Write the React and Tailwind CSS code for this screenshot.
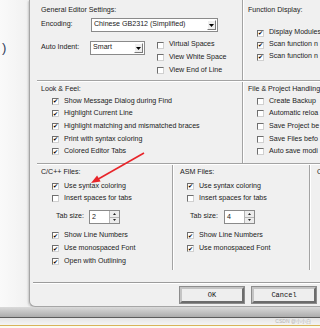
import React from "react";

function Box({ checked }) {
  return (
    <span className="flex items-center justify-center w-[7px] h-[7px] shrink-0 bg-white border border-t-[#6e6e6e] border-l-[#6e6e6e] border-r-[#d0d0d0] border-b-[#d0d0d0]">
      {checked && (
        <span className="block text-[6px] leading-none font-['DejaVu_Sans',sans-serif] text-[#000000]">✔</span>
      )}
    </span>
  );
}

function Row({ checked, label, h }) {
  return (
    <div className={"flex items-center gap-[5px] " + h}>
      <Box checked={checked} />
      <span className="whitespace-nowrap leading-none">{label}</span>
    </div>
  );
}

function Select({ w, text }) {
  return (
    <div className={"flex items-center h-[14px] bg-white border border-[#8a8a8a] " + w}>
      <span className="flex-1 pl-[2px] whitespace-nowrap overflow-hidden leading-none">{text}</span>
      <span className="w-[9px] h-[10px] mr-[1px] bg-[#efefef] border border-t-[#ffffff] border-l-[#ffffff] border-r-[#7a7a7a] border-b-[#7a7a7a] flex items-center justify-center">
        <svg width="5" height="3" viewBox="0 0 5 3">
          <path d="M0 0H5L2.5 3Z" fill="#000" />
        </svg>
      </span>
    </div>
  );
}

function Spin({ v }) {
  return (
    <div className="flex h-[14px] w-[31px] bg-white border border-[#8a8a8a]">
      <span className="flex-1 pl-[2px] leading-[12px]">{v}</span>
      <div className="w-[10px] flex flex-col bg-[#ececec] border-l border-[#b4b4b4]">
        <div className="flex-1 flex items-center justify-center border-b border-[#b4b4b4]">
          <svg width="3" height="2" viewBox="0 0 3 2">
            <path d="M0 2H3L1.5 0Z" fill="#222" />
          </svg>
        </div>
        <div className="flex-1 flex items-center justify-center">
          <svg width="3" height="2" viewBox="0 0 3 2">
            <path d="M0 0H3L1.5 2Z" fill="#222" />
          </svg>
        </div>
      </div>
    </div>
  );
}

function VSep() {
  return <div className="w-[2px] shrink-0 border-l border-[#a3a3a3] bg-white" />;
}

export default function App() {
  return (
    <div className="relative w-[320px] h-[328px] overflow-hidden bg-[#f8f8f8] font-['Liberation_Sans',Arial,sans-serif] text-[7.1px] text-[#222222]">
      <div className="flex h-[307px]">
        <div className="w-[29px] shrink-0 bg-gradient-to-r from-[#fafafa] to-[#f1f1f1]">
          <div className="pt-[41px] pl-[2px] text-[13px] leading-none text-[#2e3a58]">)</div>
        </div>
        <div className="flex-1 flex flex-col bg-[#f0f0f0] border-l border-b border-[#a6a6a6] rounded-bl-[6px] shadow-[-1px_1px_2px_rgba(0,0,0,0.18)] overflow-hidden">
          {/* Section 1 */}
          <div className="flex h-[80px]">
            <div className="w-[212px] shrink-0 pl-[11px]">
              <div className="mt-[4px] h-[12px] leading-[12px]">General Editor Settings:</div>
              <div className="mt-[2px] flex items-center h-[14px]">
                <span className="w-[50px] leading-none">Encoding:</span>
                <Select w="w-[127px]" text="Chinese GB2312 (Simplified)" />
              </div>
              <div className="mt-[7px] flex items-start">
                <div className="mt-[2px] flex items-center h-[14px]">
                  <span className="w-[49px] leading-none">Auto Indent:</span>
                  <Select w="w-[55px]" text="Smart" />
                </div>
                <div className="ml-[12px] flex flex-col">
                  <Row h="h-[12px]" label="Virtual Spaces" />
                  <Row h="h-[13px]" label="View White Space" />
                  <Row h="h-[13px]" label="View End of Line" />
                </div>
              </div>
            </div>
            <VSep />
            <div className="flex-1 pl-[4px] overflow-hidden">
              <div className="mt-[4px] h-[12px] leading-[12px] whitespace-nowrap">Function Display:</div>
              <div className="mt-[11px] pl-[9px] flex flex-col">
                <Row h="h-[12px]" checked label="Display Modules" />
                <Row h="h-[12px]" checked label="Scan function n" />
                <Row h="h-[12px]" checked label="Scan function n" />
              </div>
            </div>
          </div>
          <div className="h-[2px] ml-[7px] border-t border-[#a3a3a3] bg-white" />

          {/* Section 2 */}
          <div className="flex h-[81px]">
            <div className="w-[212px] shrink-0 pl-[11px]">
              <div className="mt-[1px] h-[12px] leading-[12px]">Look &amp; Feel:</div>
              <div className="pl-[11px] flex flex-col">
                <Row h="h-[12.6px]" checked label="Show Message Dialog during Find" />
                <Row h="h-[12.6px]" checked label="Highlight Current Line" />
                <Row h="h-[12.6px]" checked label="Highlight matching and mismatched braces" />
                <Row h="h-[12.6px]" checked label="Print with syntax coloring" />
                <Row h="h-[12.6px]" checked label="Colored Editor Tabs" />
              </div>
            </div>
            <VSep />
            <div className="flex-1 pl-[4px] overflow-hidden">
              <div className="mt-[1px] h-[12px] leading-[12px] whitespace-nowrap">File &amp; Project Handling</div>
              <div className="pl-[9px] flex flex-col">
                <Row h="h-[12.6px]" label="Create Backup" />
                <Row h="h-[12.6px]" label="Automatic reloa" />
                <Row h="h-[12.6px]" label="Save Project be" />
                <Row h="h-[12.6px]" label="Save Files befo" />
                <Row h="h-[12.6px]" label="Auto save modi" />
              </div>
            </div>
          </div>
          <div className="h-[2px] ml-[7px] border-t border-[#a3a3a3] bg-white" />

          {/* Section 3 */}
          <div className="flex h-[105px]">
            <div className="w-[142px] shrink-0 pl-[11px]">
              <div className="mt-[1px] h-[12px] leading-[12px]">C/C++ Files:</div>
              <div className="mt-[2px] pl-[11px] flex flex-col">
                <Row h="h-[12.5px]" checked label="Use syntax coloring" />
                <Row h="h-[12.5px]" label="Insert spaces for tabs" />
              </div>
              <div className="mt-[5px] pl-[15px] flex items-center h-[14px]">
                <span className="w-[33px] leading-none">Tab size:</span>
                <Spin v="2" />
              </div>
              <div className="mt-[5px] pl-[11px] flex flex-col">
                <Row h="h-[13px]" checked label="Show Line Numbers" />
                <Row h="h-[13px]" checked label="Use monospaced Font" />
                <Row h="h-[13px]" checked label="Open with Outlining" />
              </div>
            </div>
            <VSep />
            <div className="w-[135px] shrink-0 pl-[6px]">
              <div className="mt-[1px] h-[12px] leading-[12px]">ASM Files:</div>
              <div className="mt-[2px] pl-[7px] flex flex-col">
                <Row h="h-[12.5px]" checked label="Use syntax coloring" />
                <Row h="h-[12.5px]" label="Insert spaces for tabs" />
              </div>
              <div className="mt-[5px] pl-[10px] flex items-center h-[14px]">
                <span className="w-[34px] leading-none">Tab size:</span>
                <Spin v="4" />
              </div>
              <div className="mt-[5px] pl-[7px] flex flex-col">
                <Row h="h-[13px]" checked label="Show Line Numbers" />
                <Row h="h-[13px]" checked label="Use monospaced Font" />
              </div>
            </div>
            <VSep />
            <div className="flex-1 pl-[6px] overflow-hidden">
              <div className="mt-[1px] h-[12px] leading-[12px] whitespace-nowrap">O</div>
            </div>
          </div>

          <div className="mt-[12px] h-[2px] ml-[3px] border-t border-[#9c9c9c] bg-white" />

          <div className="mt-[3px] flex gap-[8px] pl-[150px]">
            <div className="w-[64px] h-[16px] shrink-0 flex items-center justify-center bg-[#eeeeee] border-[2px] border-t-[#c4c4c4] border-l-[#c4c4c4] border-r-[#6c6c6c] border-b-[#6c6c6c] outline outline-1 outline-[#8c8c8c] font-['Liberation_Mono',monospace] text-[7px] leading-none text-[#111]">
              OK
            </div>
            <div className="w-[64px] h-[16px] shrink-0 flex items-center justify-center bg-[#eeeeee] border-[2px] border-t-[#c4c4c4] border-l-[#c4c4c4] border-r-[#6c6c6c] border-b-[#6c6c6c] outline outline-1 outline-[#8c8c8c] font-['Liberation_Mono',monospace] text-[7px] leading-none text-[#111]">
              Cancel
            </div>
          </div>
        </div>
      </div>

      <div className="h-[21px] flex flex-col">
        <div className="h-[10px] bg-gradient-to-b from-[#dadada] to-[#acacac]" />
        <div className="h-[1px] bg-[#5c5c5c]" />
        <div className="h-[7px] bg-gradient-to-b from-[#e6e6e6] to-[#f4f4f4] flex items-center justify-end pr-[9px]">
          <span className="text-[5px] leading-none text-[#b4b4b4] font-['Liberation_Sans','Noto_Sans_CJK_SC',sans-serif]">CSDN @小小白</span>
        </div>
        <div className="h-[1px] bg-[#d8b458]" />
        <div className="flex-1 bg-[#fbfaf4]" />
      </div>

      <svg className="absolute left-0 top-0 pointer-events-none" width="320" height="328" viewBox="0 0 320 328">
        <line x1="144" y1="153" x2="97" y2="179.7" stroke="#e8252a" strokeWidth="1.6" />
        <polygon points="91,183 100.6,181.6 97.1,175.5" fill="#e8252a" />
      </svg>
    </div>
  );
}
